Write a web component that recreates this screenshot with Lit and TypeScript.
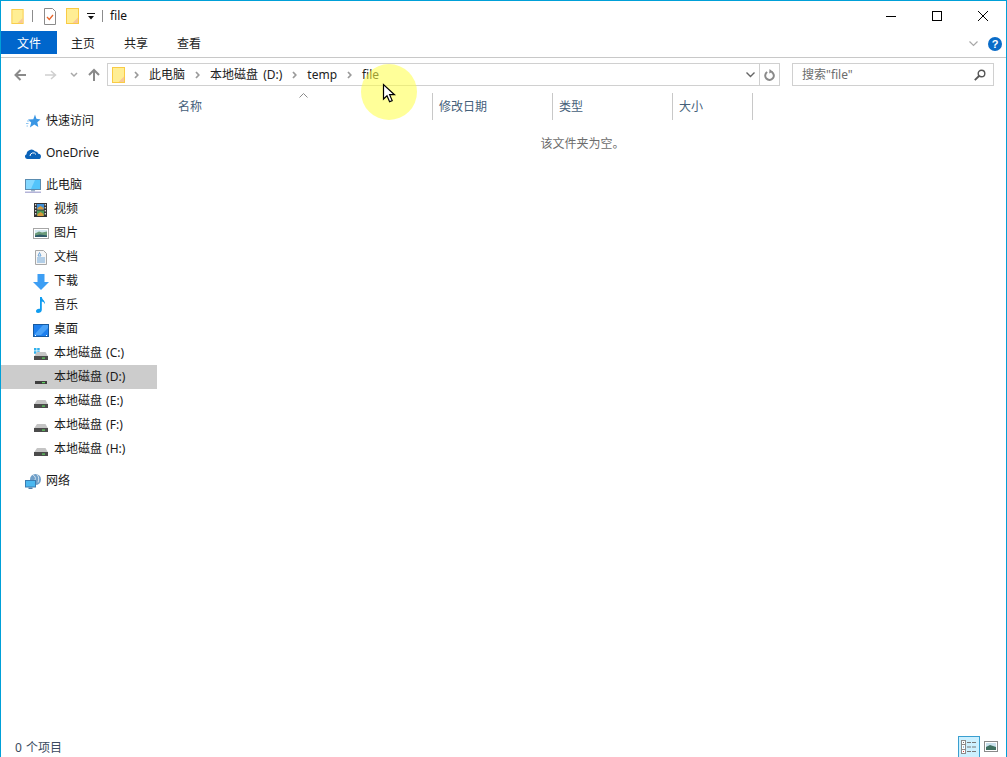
import { LitElement, html, css, svg } from "lit";
import { customElement } from "lit/decorators.js";

const folder = (w = 13, h = 16) => html`<svg class="ic" width=${w} height=${h} viewBox="0 0 13 16">
  <rect x=".5" y=".5" width="12" height="15" fill="#ffee94" stroke="#f9cb45"/>
  <path d="M12 9.500V15H6.500z" fill="#f8c898"/></svg>`;

const drive = (win = false) => html`<svg class="ic" width="16" height="16" viewBox="0 0 16 16">
  ${win ? svg`<path d="M1 3h2.500v2.500H1zM4.200 3h2.500v2.500H4.200zM1 6.200h2.500v2.500H1zM4.200 6.200h2.500v2.500H4.200z" fill="#2fb0ec"/>` : ""}
  <path d="M4 7h8.500l2.500 4.500H1z" fill="#c4c4c4"/>
  <rect x="1" y="11" width="14" height="4" fill="#4b4b4b"/>
  <rect x="9" y="12.500" width="3" height="1.200" fill="#5fd35f"/></svg>`;

const driveSel = html`<svg class="ic" width="16" height="16" viewBox="0 0 16 16">
  <rect x="2" y="12" width="12" height="3" fill="#3f3f3f"/>
  <rect x="9" y="13" width="3" height="1.200" fill="#5fd35f"/></svg>`;

const star = html`<svg class="ic" width="16" height="16" viewBox="0 0 16 16">
  <path d="M10 1.500l1.400 4.300 4.100.7-3.200 2.800 1 4.700-4-2.400-4.400 3 1.300-5-3.200-3 5.300-.4z" fill="#3a96e4"/>
  <path d="M2 8h2.500M1 10.500h2.500M1.500 13h1.500" stroke="#8cc4f0" stroke-width="1"/></svg>`;

const cloud = html`<svg class="ic" width="16" height="16" viewBox="0 0 16 16">
  <path d="M2.500 14a2.500 2.500 0 0 1-1-4.800A4.900 4.900 0 0 1 10 6.200a3.300 3.300 0 0 1 3.300 2.600A2.600 2.600 0 0 1 13.400 14z" fill="#0a62b8"/>
  <path d="M5 11a3.200 3.200 0 0 1 6-1.500" stroke="#fff" fill="none"/></svg>`;

const monitor = html`<svg class="ic" width="16" height="16" viewBox="0 0 16 16">
  <rect x=".5" y="2.500" width="15" height="10" fill="#52c4fb" stroke="#5a8cb0"/>
  <path d="M1 3h9l-4 9H1z" fill="#84d8ff"/>
  <path d="M6 13h4v1.500H6z" fill="#9db4c8"/><path d="M0 14.500h16V16H0z" fill="#b4b4d8"/></svg>`;

const film = html`<svg class="ic" width="16" height="16" viewBox="0 0 16 16">
  <rect x="1" y="2" width="13" height="14" fill="#333"/>
  <path d="M2 3h1.300v1.500H2zM2 6h1.300v1.500H2zM2 9h1.300v1.500H2zM2 12h1.300v1.500H2zM11.700 3H13v1.500h-1.300zM11.700 6H13v1.500h-1.300zM11.700 9H13v1.500h-1.300zM11.700 12H13v1.500h-1.300z" fill="#d8d8d8"/>
  <rect x="4" y="3" width="7" height="5.500" fill="#3f8fd8"/>
  <rect x="4" y="9.500" width="7" height="5.500" fill="#4e9a5a"/>
  <path d="M4.500 7l3-2 3 2v1.500h-6zM4.500 13l3-2 3 2v2h-6z" fill="#d89a3a"/></svg>`;

const picture = html`<svg class="ic" width="16" height="16" viewBox="0 0 16 16">
  <rect x=".5" y="3.500" width="15" height="10" fill="#fff" stroke="#a6a6a6"/>
  <rect x="2" y="5" width="12" height="7" fill="#d4e8f0"/>
  <path d="M2 8.500l4-2 3 1 5-1V12H2z" fill="#6a9a78"/>
  <path d="M2 10.500l5-1 7 1V12H2z" fill="#2f5a6a"/></svg>`;

const doc = html`<svg class="ic" width="16" height="16" viewBox="0 0 16 16">
  <path d="M2.500 1.500h8l3 3v11h-11z" fill="#f6f6f6" stroke="#a8a8a8"/>
  <path d="M5 7l1.500-3.500L8 7zM4 9h8M4 11h8M4 13h8" stroke="#6fa6d8" fill="none"/></svg>`;

const down = html`<svg class="ic" width="16" height="17" viewBox="0 0 16 17">
  <path d="M4.500 1h7v8H16l-8 8-8-8h4.500z" fill="#3d9ef4"/></svg>`;

const music = html`<svg class="ic" width="16" height="16" viewBox="0 0 16 16">
  <path d="M7 0h1.800c.4 3 3.600 3.600 3.200 7.200-.5-1.700-1.900-2.600-3.200-2.800V13c0 2-2 3-3.800 3C3.500 16 3 15 3 14c0-1.500 2-2.800 4-2.200z" fill="#0f9cf0"/></svg>`;

const desk = html`<svg class="ic" width="16" height="16" viewBox="0 0 16 16">
  <rect x=".5" y="3.500" width="15" height="12" fill="#1e80ee" stroke="#175aa0"/>
  <path d="M1 14l9-10h5v3l-7 7z" fill="#4aa2f8"/>
  <path d="M2 14h1v1H2zM13 14h1v1h-1z" fill="#fff"/></svg>`;

const globe = html`<svg class="ic" width="16" height="16" viewBox="0 0 16 16">
  <circle cx="10.500" cy="6.500" r="5.500" fill="#6f9fc8"/>
  <path d="M8 2c2 1 3 3 2 5M12 1.500c2 2 2 5 1 8" stroke="#d4e4f0" fill="none"/>
  <rect x=".5" y="7.500" width="10" height="6.500" fill="#4bb8f0" stroke="#3a7cb0"/>
  <path d="M3.500 14.500h4V16h-4z" fill="#4a7ca8"/></svg>`;

interface Row { icon: unknown; label: string; top?: boolean; sel?: boolean; }

const rows: Row[] = [
  { icon: star, label: "快速访问", top: true },
  { icon: cloud, label: "OneDrive", top: true },
  { icon: monitor, label: "此电脑", top: true },
  { icon: film, label: "视频" },
  { icon: picture, label: "图片" },
  { icon: doc, label: "文档" },
  { icon: down, label: "下载" },
  { icon: music, label: "音乐" },
  { icon: desk, label: "桌面" },
  { icon: drive(true), label: "本地磁盘 (C:)" },
  { icon: driveSel, label: "本地磁盘 (D:)", sel: true },
  { icon: drive(), label: "本地磁盘 (E:)" },
  { icon: drive(), label: "本地磁盘 (F:)" },
  { icon: drive(), label: "本地磁盘 (H:)" },
  { icon: globe, label: "网络", top: true },
];

const crumbChevron = html`<svg class="crumb-chev" width="5" height="8" viewBox="0 0 5 8"><path d="M1 1L3.800 4 1 7" fill="none" stroke="#9a9a9a" stroke-width="1.700"/></svg>`;

@customElement("app-root")
export class AppRoot extends LitElement {
  static styles = css`
    :host {
      display: block;
      width: 1007px;
      height: 757px;
      overflow: hidden;
    }
    * { box-sizing: border-box; }
    .win {
      position: relative;
      width: 1007px;
      height: 757px;
      background: #fff;
      border: 1px solid #00a0d8;
      border-bottom: 0;
      display: flex;
      flex-direction: column;
      font: 12px/16px "Noto Sans", "Noto Sans CJK SC", sans-serif;
      word-spacing: 1px;
      color: #1a1a1a;
    }
    .ic { display: block; flex: none; }
    .title {
      height: 30px;
      flex: none;
      display: flex;
      align-items: center;
      padding-left: 10px;
    }
    .sep { width: 1px; height: 12px; background: #8c8c8c; flex: none; }
    .sep1 { margin-left: 8px; margin-right: 11px; }
    .sep2 { margin-left: 7px; }
    .gap { width: 10px; flex: none; }
    .drop { margin-left: 8px; }
    .title-text { margin-left: 7px; color: #111; }
    .wbtns { margin-left: auto; display: flex; align-self: stretch; }
    .wbtn { width: 46px; display: flex; align-items: center; justify-content: center; }
    .tabs {
      height: 27px;
      flex: none;
      display: flex;
      border-bottom: 1px solid #c8c8c8;
      align-items: flex-start;
    }
    .tab { height: 23px; line-height: 25px; margin-right: 29px; color: #222; }
    .tab.file {
      width: 56px;
      background: #0066cc;
      color: #fff;
      text-align: center;
      margin-right: 14px;
    }
    .tabs-right { margin-left: auto; display: flex; align-items: center; height: 26px; padding-right: 4px; }
    .help {
      width: 14px;
      height: 14px;
      margin-left: 10px;
      border-radius: 50%;
      background: #0a6cc8;
      color: #fff;
      font: bold 11px/14px "Liberation Sans", sans-serif;
      text-align: center;
    }
    .tabs-right svg { display: block; }
    .navrow {
      flex: none;
      margin-top: 5px;
      height: 23px;
      display: flex;
    }
    .addr {
      width: 673px;
      border: 1px solid #d0d0d0;
      display: flex;
      align-items: center;
      padding-left: 4px;
    }
    .crumb-chev { margin-left: 10px; margin-right: 10px; flex: none; display: block; }
    .crumbs { display: flex; align-items: center; margin-left: -1px; color: #222; word-spacing: 2px; }
    .addr-right { margin-left: auto; display: flex; align-items: center; height: 100%; }
    .addr-div { width: 1px; align-self: stretch; background: #d0d0d0; margin-left: 4px; }
    .refresh { margin: 0 4px; }
    .search {
      width: 202px;
      margin-left: 12px;
      border: 1px solid #d0d0d0;
      display: flex;
      align-items: center;
      padding: 0 7px 0 9px;
      color: #6d6d6d;
      justify-content: space-between;
    }
    .main { flex: 1; display: flex; min-height: 0; margin-top: 7px; }
    .side { width: 156px; flex: none; padding-top: 16px; }
    .row {
      height: 24px;
      display: flex;
      align-items: center;
      gap: 5px;
      padding-left: 32px;
      color: #1a1a1a;
    }
    .row.top { padding-left: 24px; margin-bottom: 8px; }
    .row.parent { margin-bottom: 0; }
    .row.last { margin-bottom: 8px; }
    .row.sel { background: #cccccc; }
    .content { flex: 1; min-width: 0; display: flex; flex-direction: column; }
    .head { position: relative; display: flex; height: 27px; flex: none; color: #45607a; }
    .col { height: 27px; line-height: 28px; border-right: 1px solid #c8c8c8; width: 120px; padding-left: 6px; flex: none; }
    .col.name { width: 276px; padding-left: 21px; }
    .col.size { width: 80px; }
    .sort { position: absolute; left: 142px; top: 0; display: block; }
    .empty { text-align: center; color: #6d6d6d; margin-top: 16px; padding-left: 2px; }
    .status {
      flex: none;
      height: 21px;
      display: flex;
      align-items: center;
      padding-left: 14px;
      color: #3a4a60;
    }
    .count { margin-top: 2px; }
    .views { margin-left: auto; display: flex; align-items: center; align-self: stretch; }
    .vbtn {
      width: 22px;
      height: 21px;
      background: #ccf0ff;
      border: 1px solid #3a9fd0;
      border-bottom: 0;
      display: flex;
      align-items: center;
      justify-content: center;
    }
    .vpic { margin: 0 8px 0 4px; }
    .spot {
      position: absolute;
      left: 360px;
      top: 63px;
      width: 56px;
      height: 56px;
      border-radius: 50%;
      background: rgba(255, 255, 69, 0.55);
    }
    .cursor { position: absolute; left: 380px; top: 81px; display: block; }
  `;

  render() {
    return html`<div class="win">
      <div class="title">
        ${folder(13, 15)}
        <span class="sep sep1"></span>
        <svg class="ic" width="12" height="17" viewBox="0 0 12 17">
          <path d="M.5.5h8l3 3v13H.5z" fill="#fff" stroke="#8a8a8a"/>
          <path d="M3 9l2.300 2.500L9 7" fill="none" stroke="#e8652a" stroke-width="1.300"/>
        </svg>
        <span class="gap"></span>
        ${folder(13, 16)}
        <svg class="ic drop" width="8" height="8" viewBox="0 0 8 8"><path d="M0 1h8V2H0zM1 4h6L4 7.500z" fill="#111"/></svg>
        <span class="sep sep2"></span>
        <span class="title-text">file</span>
        <div class="wbtns">
          <div class="wbtn"><svg width="10" height="10" viewBox="0 0 10 10"><path d="M0 5.500h10" stroke="#000"/></svg></div>
          <div class="wbtn"><svg width="10" height="10" viewBox="0 0 10 10"><rect x=".5" y=".5" width="9" height="9" fill="none" stroke="#000"/></svg></div>
          <div class="wbtn"><svg width="10" height="10" viewBox="0 0 10 10"><path d="M0 0l10 10M10 0L0 10" stroke="#000"/></svg></div>
        </div>
      </div>
      <div class="tabs">
        <div class="tab file">文件</div>
        <div class="tab">主页</div>
        <div class="tab">共享</div>
        <div class="tab">查看</div>
        <div class="tabs-right">
          <svg width="9" height="6" viewBox="0 0 9 6"><path d="M.5.500L4.500 4.500 8.500.500" fill="none" stroke="#a8a8a8" stroke-width="1.200"/></svg>
          <div class="help">?</div>
        </div>
      </div>
      <div class="navrow">
        <svg class="ic" width="106" height="23" viewBox="0 0 106 23">
          <path d="M25 12H15M19.500 7L14.500 12l5 5" fill="none" stroke="#8a8a8a" stroke-width="2"/>
          <path d="M44 12h10M50 8l4.500 4-4.500 4" fill="none" stroke="#cfcfcf" stroke-width="1.500"/>
          <path d="M70 10l3 3 3-3" fill="none" stroke="#a8a8a8" stroke-width="1.500"/>
          <path d="M93 18V7M88 12l5-5 5 5" fill="none" stroke="#8a8a8a" stroke-width="2"/>
        </svg>
        <div class="addr">
          ${folder(13, 16)}
          <div class="crumbs">
            ${crumbChevron}<span>此电脑</span>
            ${crumbChevron}<span>本地磁盘 (D:)</span>
            ${crumbChevron}<span>temp</span>
            ${crumbChevron}<span>file</span>
          </div>
          <div class="addr-right">
            <svg width="9" height="6" viewBox="0 0 9 6"><path d="M.5.500L4.500 4.500 8.500.500" fill="none" stroke="#666" stroke-width="1.400"/></svg>
            <div class="addr-div"></div>
            <svg class="refresh" width="11" height="12" viewBox="0 0 11 12"><path d="M7.500 2.800A4.300 4.300 0 1 1 3.200 3" fill="none" stroke="#8a8a8a" stroke-width="2"/><path d="M5.500 0l3.500 2.800-3.800 1.600z" fill="#8a8a8a"/></svg>
          </div>
        </div>
        <div class="search">
          <span>搜索"file"</span>
          <svg class="ic" width="12" height="12" viewBox="0 0 12 12"><circle cx="7.500" cy="4.500" r="3.300" fill="none" stroke="#555" stroke-width="1.400"/><path d="M5 7L.8 11.200" stroke="#555" stroke-width="1.800"/></svg>
        </div>
      </div>
      <div class="main">
        <div class="side">
          ${rows.map(
            (r, i) => html`<div class="row ${r.top ? "top" : ""} ${r.sel ? "sel" : ""} ${i === 2 ? "parent" : ""} ${i === 13 ? "last" : ""}">${r.icon}<span>${r.label}</span></div>`
          )}
        </div>
        <div class="content">
          <div class="head">
            <div class="col name">名称</div>
            <div class="col">修改日期</div>
            <div class="col">类型</div>
            <div class="col size">大小</div>
            <svg class="sort" width="9" height="5" viewBox="0 0 9 5"><path d="M.5 4.500l4-4 4 4" fill="none" stroke="#8a8a8a"/></svg>
          </div>
          <div class="empty">该文件夹为空。</div>
        </div>
      </div>
      <div class="status">
        <span class="count">0 个项目</span>
        <div class="views">
          <div class="vbtn">
            <svg class="ic" width="16" height="14" viewBox="0 0 16 14">
              <rect x=".5" y=".5" width="4" height="13" fill="#fff" stroke="#8a8a8a"/>
              <path d="M1 4.500h3M1 9.500h3" stroke="#8a8a8a"/>
              <path d="M2 2h1v1H2z" fill="#777"/><path d="M2 6.500h1v1H2z" fill="#3a8fd0"/><path d="M2 11h1v1H2z" fill="#d04040"/>
              <path d="M6 2.500h4M11 2.500h4M6 7h4M11 7h4M6 11.500h4M11 11.500h4" stroke="#777"/>
            </svg>
          </div>
          <svg class="ic vpic" width="14" height="11" viewBox="0 0 14 11">
            <rect x=".5" y=".5" width="13" height="10" fill="#fff" stroke="#8a8a8a"/>
            <rect x="2" y="2" width="10" height="7" fill="#c8e0ec"/>
            <path d="M2 6l4-2 6 2v3H2z" fill="#3f7060"/>
          </svg>
        </div>
      </div>
      <div class="spot"></div>
      <svg class="cursor" width="16" height="22" viewBox="0 0 16 22">
        <path d="M2.500 2.500V17l3.500-3.300 2.600 6 2.600-1.100-2.600-5.900h4.900z" fill="#fff" stroke="#000" stroke-width="1.200"/>
      </svg>
    </div>`;
  }
}
